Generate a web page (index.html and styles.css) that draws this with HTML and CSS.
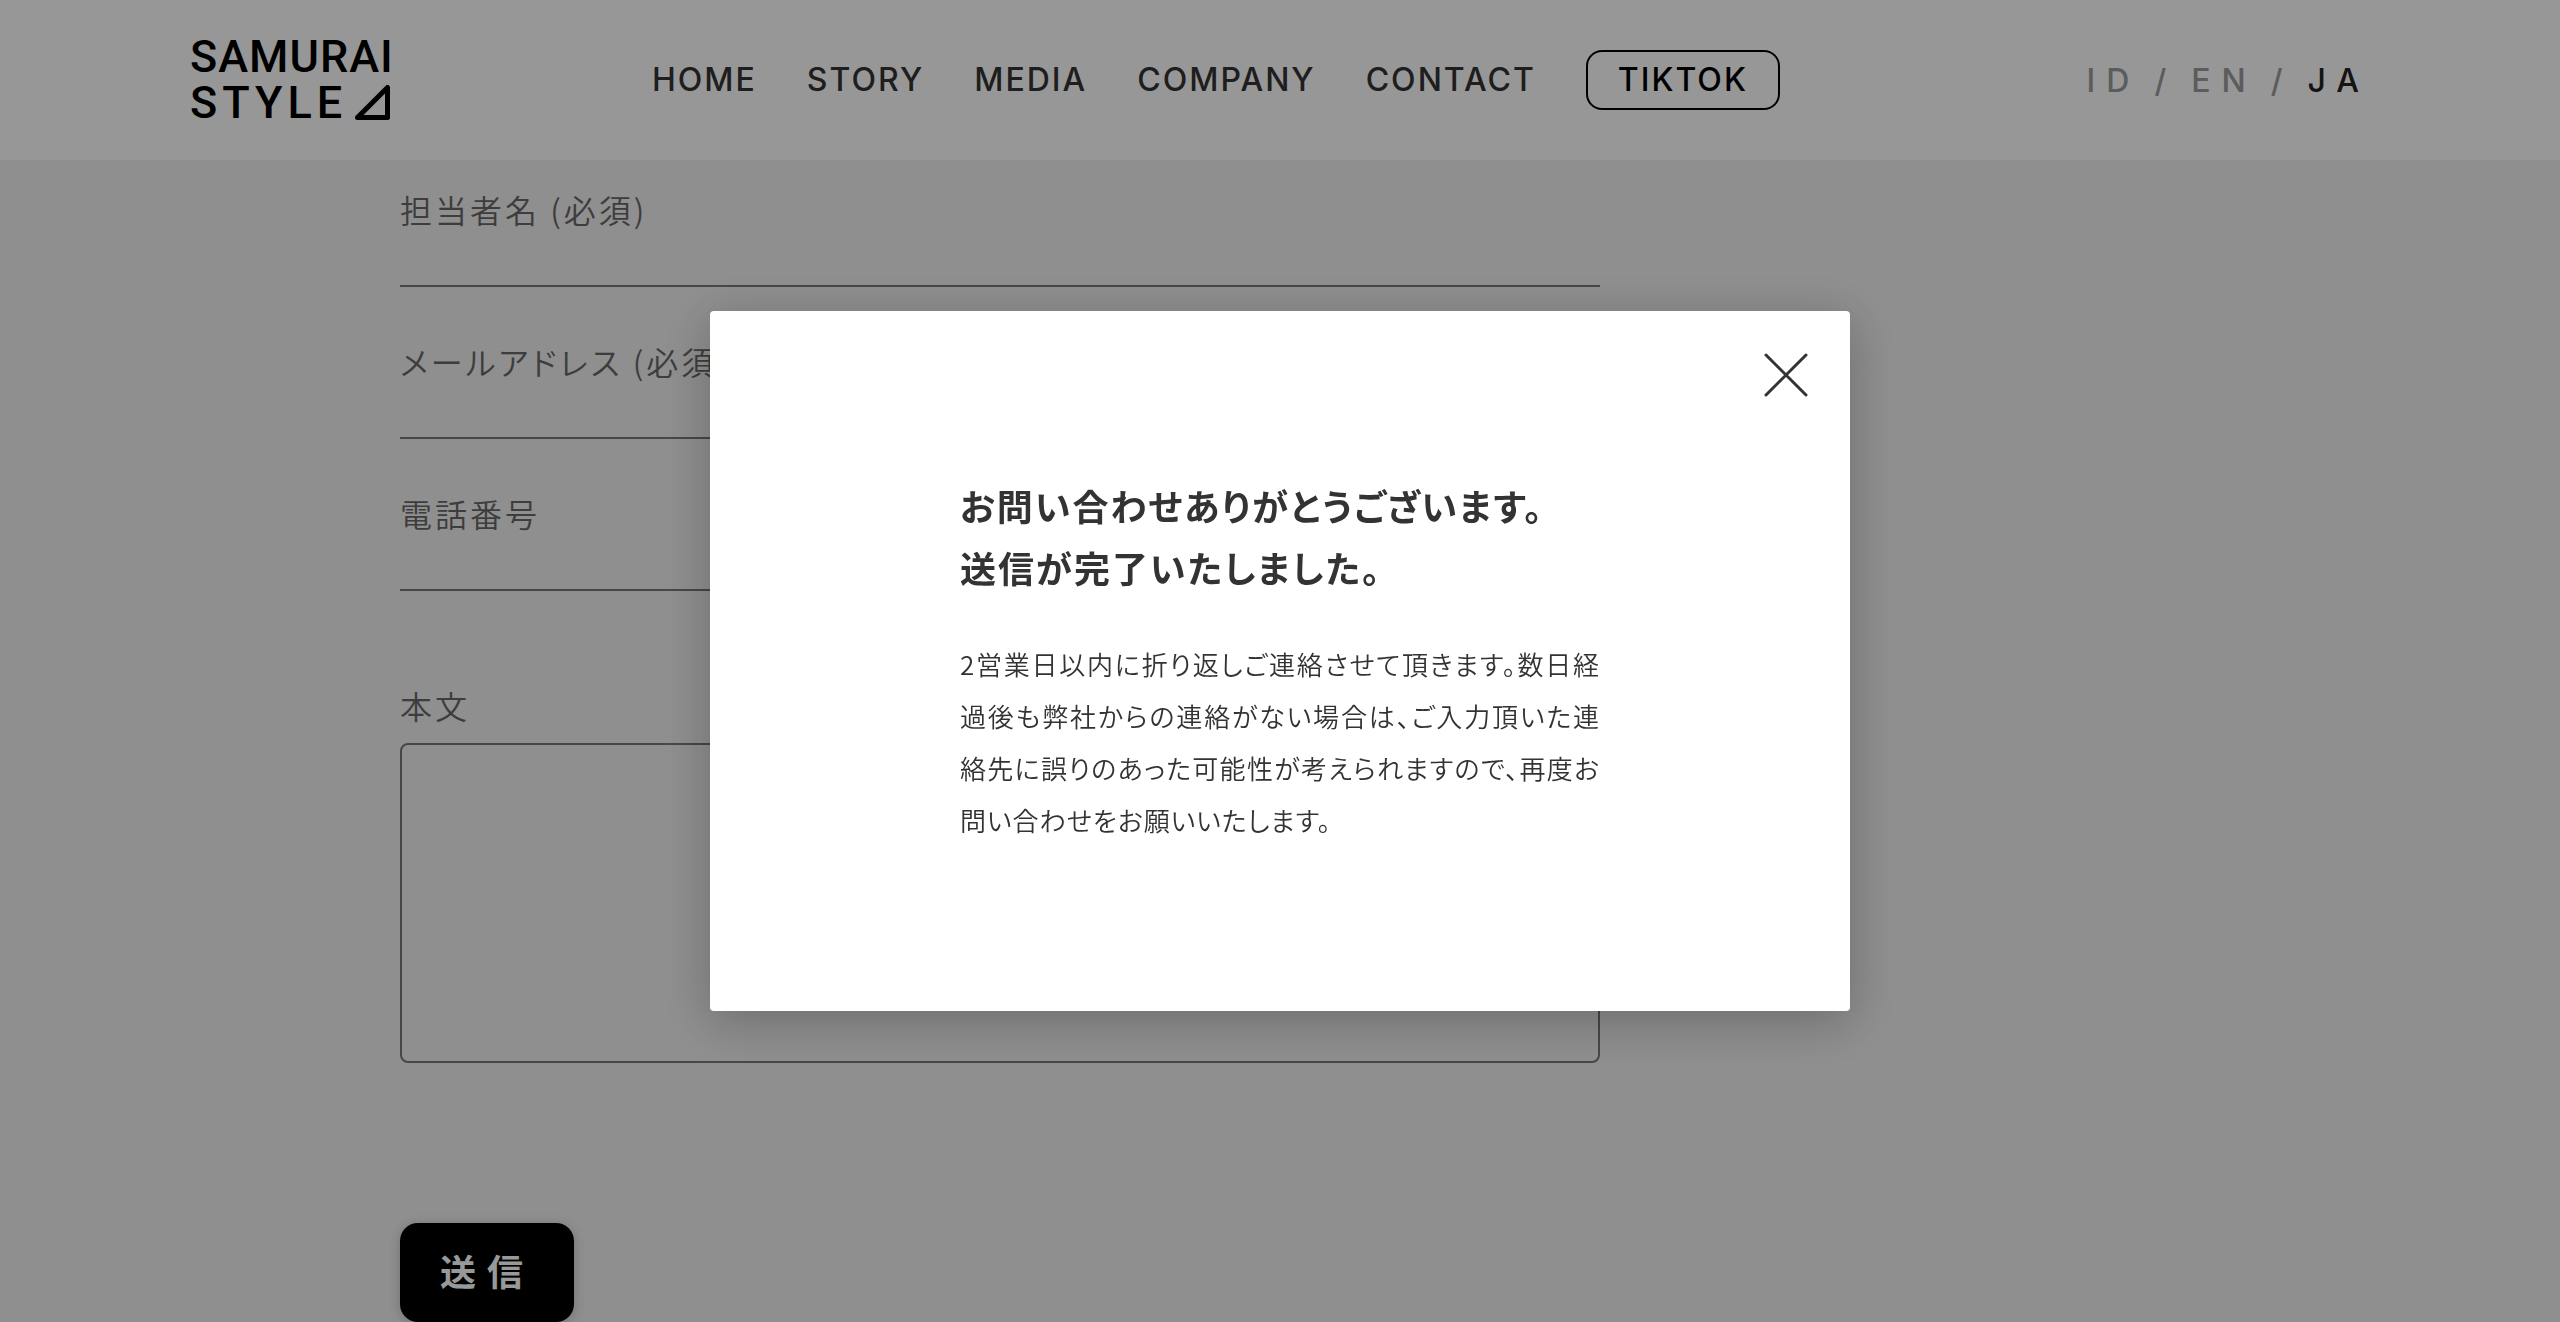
FILE: index.html
```html
<!DOCTYPE html>
<html lang="ja">
<head>
<meta charset="utf-8">
<meta name="viewport" content="width=device-width, initial-scale=1">
<title>CONTACT | SAMURAI STYLE</title>
<link rel="stylesheet" href="styles.css">
</head>
<body>
<header class="header">
  <a class="logo" href="#">
    <span class="logo-line">SAMURAI</span>
    <span class="logo-line logo-line-wide">STYLE<svg class="logo-mark" viewBox="0 0 36 36" aria-hidden="true"><path d="M2.500 32.500L32.500 2.500V32.500Z" fill="none" stroke="currentColor" stroke-width="5" stroke-linejoin="round"/></svg></span>
  </a>
  <nav class="nav">
    <a href="#">HOME</a>
    <a href="#">STORY</a>
    <a href="#">MEDIA</a>
    <a href="#">COMPANY</a>
    <a href="#">CONTACT</a>
    <a class="nav-button" href="#">TIKTOK</a>
  </nav>
  <div class="lang">
    <a href="#">ID</a><span>/</span><a href="#">EN</a><span>/</span><a class="current" href="#">JA</a>
  </div>
</header>
<main class="main">
  <form class="form">
    <div class="field">
      <label for="name">担当者名 (必須)</label>
      <input id="name" type="text">
    </div>
    <div class="field">
      <label for="mail">メールアドレス (必須)</label>
      <input id="mail" type="email">
    </div>
    <div class="field">
      <label for="tel">電話番号</label>
      <input id="tel" type="tel">
    </div>
    <div class="field field-message">
      <label for="message">本文</label>
      <textarea id="message"></textarea>
    </div>
    <button class="submit" type="submit">送信</button>
  </form>
</main>
<div class="overlay">
  <section class="modal" role="dialog" aria-modal="true" aria-labelledby="modal-title">
    <button class="close" type="button" aria-label="閉じる">
      <svg viewBox="0 0 48 48" aria-hidden="true"><path d="M4 4L44 44M44 4L4 44" fill="none" stroke="currentColor" stroke-width="3" stroke-linecap="round"/></svg>
    </button>
    <h2 class="modal-title" id="modal-title">お問い合わせありがとうございます。<br>送信が完了いたしました。</h2>
    <p class="modal-text">2営業日以内に折り返しご連絡させて頂きます。数日経過後も弊社からの連絡がない場合は、ご入力頂いた連絡先に誤りのあった可能性が考えられますので、再度お問い合わせをお願いいたします。</p>
  </section>
</div>
</body>
</html>
```
FILE: styles.css
```css
* {
  box-sizing: border-box;
}

body {
  margin: 0;
  background: #eee;
  color: #333;
  font-family: "Noto Sans CJK JP", sans-serif;
  font-feature-settings: "palt";
}

a {
  color: inherit;
  text-decoration: none;
}

.header {
  display: grid;
  grid-template-columns: 462px auto 1fr;
  align-items: center;
  height: 160px;
  padding: 0 190px;
  background: #fcfcfc;
  font-family: Inter, sans-serif;
}

.logo {
  display: flex;
  flex-direction: column;
  color: #000;
  font: 500 45px/46px Roboto, sans-serif;
  letter-spacing: 1px;
}

.logo-line {
  display: flex;
  align-items: center;
}

.logo-line-wide {
  letter-spacing: 5px;
}

.logo-mark {
  width: 36px;
  height: 36px;
  margin-left: 8px;
}

.nav {
  display: flex;
  align-items: center;
  gap: 50px;
  font-size: 32px;
  font-weight: 550;
  line-height: 56px;
  letter-spacing: 2px;
}

.nav-button {
  padding: 0 30px;
  border: 2px solid #000;
  border-radius: 16px;
  color: #000;
}

.lang {
  display: flex;
  justify-content: flex-end;
  gap: 14px;
  font-size: 32px;
  font-weight: 550;
  letter-spacing: 11px;
  color: #999;
}

.lang .current {
  color: #222;
}

.main {
  max-width: 1760px;
  margin: 0 auto;
  padding-top: 25px;
}

.form {
  display: flex;
  flex-direction: column;
  align-items: flex-start;
  max-width: 1200px;
}

.field {
  display: flex;
  flex-direction: column;
  width: 100%;
  margin-bottom: 50px;
  font-size: 32px;
  font-weight: 350;
  line-height: 48px;
  letter-spacing: 3px;
  color: #666;
}

.field input {
  width: 100%;
  height: 54px;
  padding: 0;
  border: 0;
  border-bottom: 2px solid #777;
  border-radius: 0;
  background: transparent;
  font: inherit;
}

.field-message {
  gap: 14px;
  margin: 40px 0 160px;
}

.field textarea {
  width: 100%;
  height: 320px;
  padding: 16px;
  border: 2px solid #777;
  border-radius: 8px;
  background: transparent;
  font: inherit;
  resize: none;
}

.submit {
  height: 99px;
  padding: 0 40px 6px;
  border: 0;
  border-radius: 18px;
  background: #000;
  box-shadow: 0 2px 12px rgba(0, 0, 0, .2);
  color: #fff;
  font: 700 36px/54px "Noto Sans CJK JP", sans-serif;
  letter-spacing: 11px;
}

.overlay {
  position: fixed;
  inset: 0;
  display: flex;
  align-items: center;
  justify-content: center;
  background: rgba(0, 0, 0, .4);
}

.modal {
  position: relative;
  width: 1140px;
  min-height: 700px;
  padding: 163px 250px;
  border-radius: 4px;
  background: #fff;
  box-shadow: 0 10px 50px rgba(0, 0, 0, .25);
}

.close {
  position: absolute;
  top: 40px;
  right: 40px;
  width: 48px;
  height: 48px;
  padding: 0;
  border: 0;
  background: none;
  color: #333;
}

.close svg {
  display: block;
}

.modal-title {
  margin: 0 0 40px;
  font-size: 36px;
  font-weight: 700;
  line-height: 62px;
  letter-spacing: 2px;
}

.modal-text {
  margin: 0;
  font-size: 26px;
  font-weight: 350;
  line-height: 52px;
  letter-spacing: 1px;
  text-align: justify;
}
```
